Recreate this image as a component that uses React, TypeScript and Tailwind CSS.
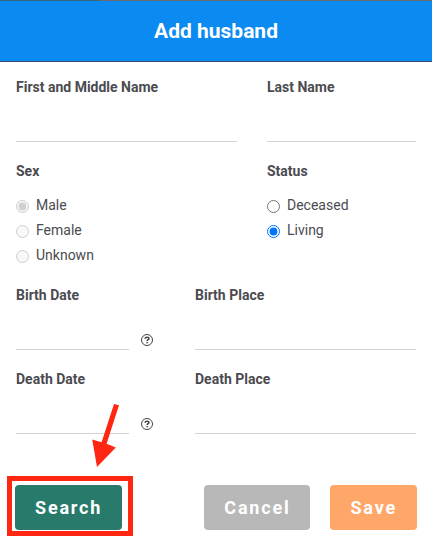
import type { ReactNode } from "react";

const labelClass = "block h-5 text-sm leading-5 font-bold text-[#4b4b50]";
const inputClass =
  "block h-[45px] w-full min-w-0 border-b border-[#d3d3d3] bg-transparent pt-4 text-sm text-[#4b4b50] outline-none";

function Field({ id, label }: { id: string; label: string }) {
  return (
    <div className="min-w-0">
      <label htmlFor={id} className={labelClass}>
        {label}
      </label>
      <input id={id} type="text" className={inputClass} />
    </div>
  );
}

function HelpIcon() {
  return (
    <svg viewBox="0 0 12 12" className="block size-3" fill="none" stroke="#424242" aria-hidden="true">
      <circle cx="6" cy="6" r="5.5" strokeWidth="1" />
      <path d="M4 4.8C4.1 3.6 4.9 3.2 6 3.2s1.9.6 1.9 1.5C7.9 5.8 6.1 5.7 6.1 7.1" strokeWidth="1.5" />
      <path d="M6.1 7.9v1.4" strokeWidth="1.5" />
    </svg>
  );
}

function DateField({ id, label }: { id: string; label: string }) {
  return (
    <div className="min-w-0">
      <label htmlFor={id} className={labelClass}>
        {label}
      </label>
      <div className="flex items-end gap-3 pr-3">
        <input id={id} type="text" className={inputClass} />
        <button type="button" aria-label={`Help with ${label}`} className="shrink-0 pb-1">
          <HelpIcon />
        </button>
      </div>
    </div>
  );
}

function RadioGroup({ legend, children }: { legend: string; children: ReactNode }) {
  return (
    <fieldset className="min-w-0">
      <legend className={labelClass}>{legend}</legend>
      <div className="pt-3">{children}</div>
    </fieldset>
  );
}

type RadioProps = { name: string; label: string; checked?: boolean; disabled?: boolean };

function Radio({ name, label, checked, disabled }: RadioProps) {
  return (
    <label className="flex h-[25px] items-start gap-[7px] text-sm leading-6 text-[#4b4b50]">
      <input
        type="radio"
        name={name}
        defaultChecked={checked}
        disabled={disabled}
        className="mt-[7px] size-[13px] shrink-0 accent-[#0075ff]"
      />
      {label}
    </label>
  );
}

const buttonClass = "h-[45px] rounded px-5 text-lg font-bold tracking-widest text-white";

export default function App() {
  return (
    <div className="bg-white font-['Roboto',sans-serif]">
      <div className="flex h-px bg-[#6d6a6b]">
        <div className="w-[23%] bg-[#36687c]" />
      </div>
      <header className="border-b border-[#3b5068] bg-[#0b8af2] py-4">
        <h1 className="text-center text-[21px] leading-7 font-bold text-white">Add husband</h1>
      </header>
      <form className="px-4 pt-[15px] pb-[15px]">
        <div className="grid grid-cols-[221fr_149fr] gap-x-[30px] gap-y-[19px]">
          <Field id="first-name" label="First and Middle Name" />
          <Field id="last-name" label="Last Name" />
          <RadioGroup legend="Sex">
            <Radio name="sex" label="Male" checked disabled />
            <Radio name="sex" label="Female" disabled />
            <Radio name="sex" label="Unknown" disabled />
          </RadioGroup>
          <RadioGroup legend="Status">
            <Radio name="status" label="Deceased" />
            <Radio name="status" label="Living" checked />
          </RadioGroup>
        </div>
        <div className="mt-[17px] grid grid-cols-[149fr_221fr] gap-x-[30px] gap-y-[19px]">
          <DateField id="birth-date" label="Birth Date" />
          <Field id="birth-place" label="Birth Place" />
          <DateField id="death-date" label="Death Date" />
          <Field id="death-place" label="Death Place" />
        </div>
        <div className="-mx-px mt-[51px] flex items-center justify-between">
          <div className="relative">
            <button type="button" className={`${buttonClass} bg-[#287b6a]`}>
              Search
            </button>
            <div className="pointer-events-none absolute -top-[9px] -right-[11px] -bottom-[6px] -left-[8px] border-5 border-[#ff2612]" />
            <svg
              viewBox="0 0 28 64"
              className="pointer-events-none absolute -top-[82px] left-[76px] h-16 w-7"
              fill="#ff2612"
              aria-hidden="true"
            >
              <path d="M23 1l5 1.3-12.4 38.4 9.2 3.8L6 64 1.2 36.4l9.4 2.8z" />
            </svg>
          </div>
          <div className="flex gap-5">
            <button type="button" className={`${buttonClass} bg-[#b8b8b8]`}>
              Cancel
            </button>
            <button type="submit" className={`${buttonClass} bg-[#ffa669]`}>
              Save
            </button>
          </div>
        </div>
      </form>
    </div>
  );
}
